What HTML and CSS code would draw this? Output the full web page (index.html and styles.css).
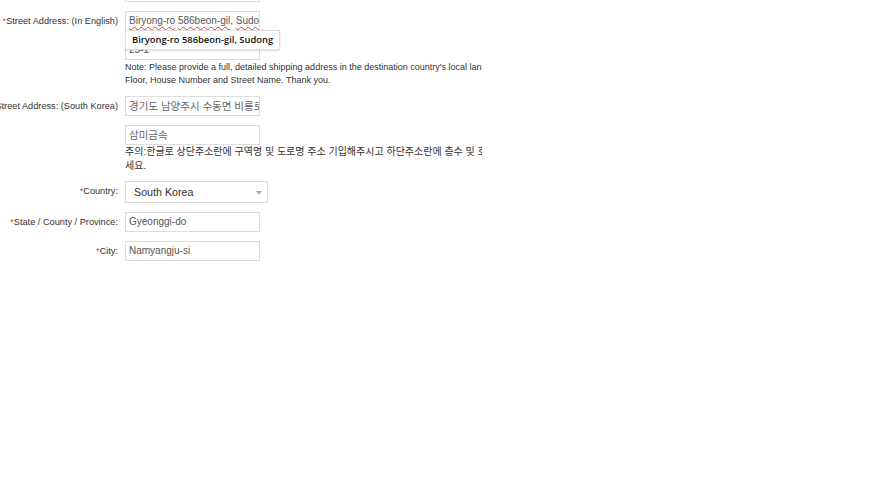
FILE: index.html
```html
<!DOCTYPE html>
<html lang="ko">
<head>
  <meta charset="UTF-8" />
  <title>Shipping Address</title>
  <meta name="viewport" content="width=device-width, initial-scale=1.0" />
  <link rel="stylesheet" href="styles.css">
</head>
<body>
  <div class="wrapper">
    <div class="row">
      <label class="label"></label>
      <div class="field">
        <div class="text"></div>
      </div>
    </div>

    <div class="row">
      <label class="label"><span class="req">*</span><span>Street Address: (In English)</span></label>
      <div class="field">
        <div class="text"><span class="spell">Biryong-ro</span> <span class="spell">586beon-gil</span>, <span class="spell">Sudong</span></div>
        <div class="suggest">Biryong-ro 586beon-gil, Sudong</div>
        <div class="text">25-1</div>
        <p class="note">Note: Please provide a full, detailed shipping address in the destination country's local language, including Room Number,<br>Floor, House Number and Street Name. Thank you.</p>
      </div>
    </div>

    <div class="row">
      <label class="label"><span class="req">*</span><span>Street Address: (South Korea)</span></label>
      <div class="field">
        <div class="text ko">경기도 남양주시 수동면 비룡로 586번길 25-1</div>
        <div class="text ko">삼미금속</div>
        <p class="note ko">주의:한글로 상단주소란에 구역명 및 도로명 주소 기입해주시고 하단주소란에 층수 및 호수를 기입해주<br>세요.</p>
      </div>
    </div>

    <div class="row">
      <label class="label"><span class="req">*</span><span>Country:</span></label>
      <div class="field">
        <div class="select">South Korea<span class="caret"></span></div>
      </div>
    </div>

    <div class="row">
      <label class="label"><span class="req">*</span><span>State / County / Province:</span></label>
      <div class="field">
        <div class="text">Gyeonggi-do</div>
      </div>
    </div>

    <div class="row">
      <label class="label"><span class="req">*</span><span>City:</span></label>
      <div class="field">
        <div class="text">Namyangju-si</div>
      </div>
    </div>
  </div>
</body>
</html>
```

FILE: styles.css
```css
body {
  margin: 0;
  background: #fff;
  font-family: Arial, "Liberation Sans", "Noto Sans CJK KR", sans-serif;
  color: #333;
}
.wrapper {
  width: 482px;
  overflow: hidden;
  margin-top: -18px;
}
.row {
  display: flex;
  align-items: flex-start;
  margin-bottom: 9px;
}
.label {
  flex: 0 0 118px;
  min-width: 0;
  display: flex;
  justify-content: flex-end;
  white-space: nowrap;
  font-size: 9.2px;
  line-height: 20px;
  margin-right: 7px;
}
.label span {
  flex-shrink: 0;
}
.req {
  color: #e4393c;
}
.field {
  flex: 1;
  min-width: 0;
  display: flex;
  flex-direction: column;
  align-items: flex-start;
  gap: 9px;
}
.text {
  box-sizing: border-box;
  width: 135px;
  height: 20px;
  border: 1px solid #ddd;
  padding: 0 3px;
  font-size: 10px;
  line-height: 18px;
  color: #555;
  white-space: nowrap;
  overflow: hidden;
  background: #fff;
}
.text.ko {
  font-size: 10.5px;
  color: #666;
}
.spell {
  text-decoration: underline wavy #e33;
  text-decoration-thickness: 1px;
  text-underline-offset: 2px;
}
.suggest {
  margin: -10px 0 -19px;
  position: relative;
  z-index: 2;
  box-sizing: border-box;
  width: 155px;
  height: 20px;
  padding: 0 6px;
  border: 1px solid #ddd;
  background: #fff;
  box-shadow: 0 1px 2px rgba(0,0,0,0.12);
  font-family: "Open Sans", "Noto Sans", sans-serif;
  font-weight: 600;
  font-size: 9.4px;
  line-height: 18px;
  color: #111;
  white-space: nowrap;
}
.note {
  margin: -8px 0 0;
  font-size: 9px;
  line-height: 13px;
  color: #333;
  white-space: nowrap;
}
.note.ko {
  margin: -9px 0 -1px;
  font-size: 10px;
  line-height: 14px;
}
.select {
  position: relative;
  box-sizing: border-box;
  width: 143px;
  height: 22px;
  border: 1px solid #ddd;
  padding: 0 8px;
  font-size: 10.7px;
  line-height: 20px;
  color: #333;
}
.caret {
  position: absolute;
  right: 5px;
  top: 9px;
  border-left: 3.5px solid transparent;
  border-right: 3.5px solid transparent;
  border-top: 4px solid #aaa;
}
```
